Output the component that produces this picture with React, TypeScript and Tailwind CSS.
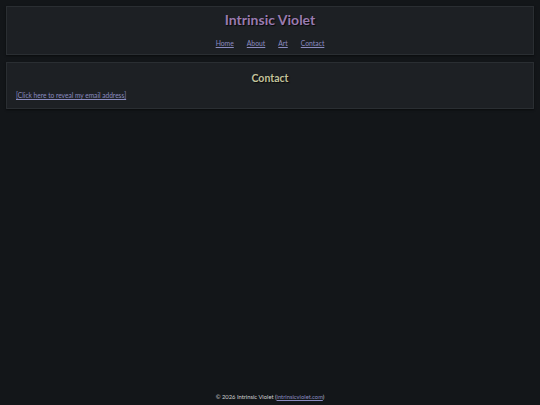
export default function App() {
  return (
    <div
      className="min-h-[405px] bg-[#131619] flex flex-col text-[#c9c9c9]"
      style={{ fontFamily: 'Lato, "Open Sans", sans-serif' }}
    >
      <header className="mx-[6px] mt-[6px] border border-[#2a2e32] bg-[#1d2024] shadow-[0_1px_2px_rgba(0,0,0,0.5)] pt-[4px] pb-[6px] flex flex-col items-center">
        <h1 className="text-[14px] leading-[18px] font-bold text-[#9a7bb0] [text-shadow:1px_1px_1px_rgba(0,0,0,0.8)]">
          Intrinsic Violet
        </h1>
        <nav className="mt-[9px] flex gap-[13px] text-[6.8px] leading-[10px]">
          <a href="#" className="underline text-[#8b8cc0]">Home</a>
          <a href="#" className="underline text-[#8b8cc0]">About</a>
          <a href="#" className="underline text-[#8b8cc0]">Art</a>
          <a href="#" className="underline text-[#8b8cc0]">Contact</a>
        </nav>
      </header>
      <main className="mx-[6px] mt-[7px] border border-[#2a2e32] bg-[#1d2024] shadow-[0_1px_2px_rgba(0,0,0,0.5)] pt-[7px] pb-[8px] px-[9px]">
        <h2 className="text-center text-[10.5px] leading-[16px] font-bold text-[#c3c29c] [text-shadow:1px_1px_1px_rgba(0,0,0,0.8)]">
          Contact
        </h2>
        <a href="#" className="block mt-[4px] text-[6.6px] leading-[10px] underline text-[#8b8cc0]">
          [Click here to reveal my email address]
        </a>
      </main>
      <div className="flex-1" />
      <footer className="text-center text-[5.8px] leading-[10px] pb-[3px] text-[#d0d0d0]">
        © 2026 Intrinsic Violet (<a href="#" className="underline text-[#8b8cc0]">intrinsicviolet.com</a>)
      </footer>
    </div>
  );
}
